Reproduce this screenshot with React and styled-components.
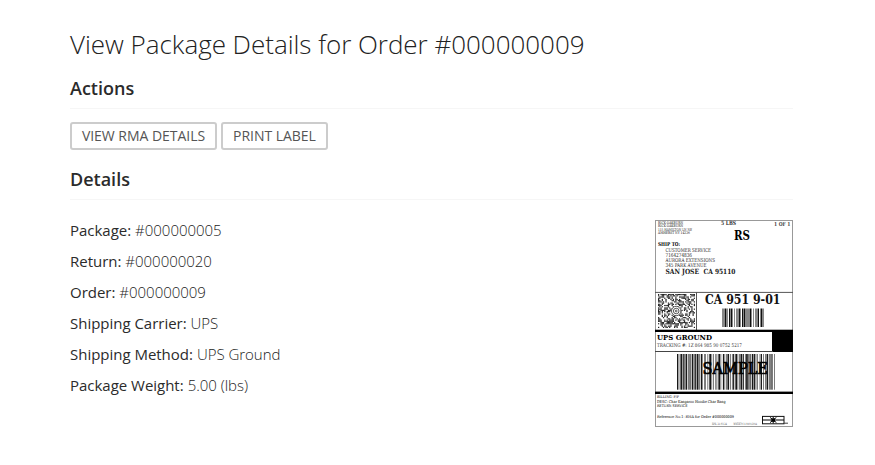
import React from "react";
import styled, { createGlobalStyle } from "styled-components";

const GlobalStyle = createGlobalStyle`
  * { box-sizing: border-box; }
  body {
    margin: 0;
    background: #fff;
    color: #2b2b2b;
    font-family: "Open Sans", sans-serif;
  }
`;

const Page = styled.main`
  width: 793px;
  height: 465px;
  padding: 26px 0 0 70px;
`;

const Title = styled.h1`
  margin: 0;
  color: #222;
  font-size: 26px;
  font-weight: 300;
  line-height: 36px;
  letter-spacing: -0.025px;
  white-space: nowrap;
`;

const SectionTitle = styled.h2`
  height: 32px;
  margin: ${(p) => p.$top}px 0 0;
  border-bottom: 1px solid #f6f6f6;
  font-size: 18px;
  font-weight: 600;
  line-height: 22px;
`;

const Actions = styled.div`
  display: flex;
  gap: 4px;
  margin-top: 13px;
`;

const Button = styled.button`
  width: ${(p) => p.$width}px;
  height: 28px;
  padding: 0;
  border: 2px solid #ccc;
  border-radius: 3px;
  background: #fff;
  color: #555;
  font: 400 14px/24px "Open Sans", sans-serif;
  letter-spacing: -0.03px;
  white-space: nowrap;
`;

const Details = styled.div`
  display: flex;
  justify-content: space-between;
  margin-top: 20px;
`;

const FieldList = styled.dl`
  margin: -5px 0 0;
`;

const Field = styled.div`
  display: flex;
  gap: 4px;
  height: 31px;
  font-size: 15px;
  line-height: 31px;
  letter-spacing: -0.02px;
`;

const Name = styled.dt`
  font-weight: 400;
`;

const Value = styled.dd`
  margin: 0;
  color: #1c1c1c;
  font-weight: 300;
`;

const LabelImage = styled.svg`
  display: block;
  width: 138px;
  height: 207px;
  font-family: "DejaVu Serif", serif;
`;

const fields = [
  ["Package:", "#000000005"],
  ["Return:", "#000000020"],
  ["Order:", "#000000009"],
  ["Shipping Carrier:", "UPS"],
  ["Shipping Method:", "UPS Ground"],
  ["Package Weight:", "5.00 (lbs)"],
];

// [text, x, baseline, width, font size, weight, colour]
const labelTexts = [
  ["RICK OAKBURN", 3, 3.6, 25, 3.7, 400, "#111"],
  ["RICK OAKBURN", 3, 7.1, 25, 3.7, 400, "#111"],
  ["115 HAMILTON LN NE", 3, 10.6, 34, 3.7, 400, "#222"],
  ["AMHERST NY 14226", 3, 14.1, 32, 3.7, 400, "#111"],
  ["5 LBS", 66, 5.2, 15, 5.8, 700, "#333"],
  ["1 OF 1", 119, 6, 16.5, 5.3, 700, "#444"],
  ["RS", 79, 19.6, 16, 12.5, 700, "#000"],
  ["SHIP TO:", 3, 26.4, 22, 5.3, 700, "#000"],
  ["CUSTOMER SERVICE", 10.5, 31.5, 45.5, 5.3, 400, "#222"],
  ["7164274836", 10.5, 36.7, 26.5, 5.3, 400, "#222"],
  ["AURORA EXTENSIONS", 10.5, 41.9, 49.5, 5.3, 400, "#222"],
  ["345 PARK AVENUE", 10.5, 47, 41, 5.3, 400, "#222"],
  ["SAN JOSE", 10.5, 54, 33.5, 7.1, 700, "#222"],
  ["CA 95110", 48.5, 54, 32, 7.1, 700, "#222"],
  ["CA 951 9-01", 50, 84, 75.5, 12.4, 700, "#111"],
  ["UPS GROUND", 2, 120, 55, 8, 700, "#000"],
  ["TRACKING #: 1Z 864 985 90 0752 5217", 2, 127.2, 85, 5.2, 400, "#333"],
  ["BILLING: P/P", 2, 178.3, 22, 3.9, 400, "#000"],
  ["DESC: Char Kangaroo Hoodie Char Bang", 2, 182.8, 68.5, 4, 400, "#000"],
  ["RETURN SERVICE", 2, 187, 30.5, 3.9, 400, "#000"],
  ["Reference No.1: RMA for Order #000000009", 2, 198.3, 77, 3.9, 400, "#000"],
  ["XOL 21.03.24", 57, 204.5, 15, 3, 400, "#444"],
  ["WNTIE70 31.0A 01/2014", 78.5, 204.5, 23.5, 3, 400, "#444"],
];

// Alternating bar and gap widths.
const shortCode = "211131132131121311123112312111222121131212113211212";
const longCode = "211231211132112231112131123311131231121311123113211211321211223112113122113111223121121311221311321121131";

function Bars({ code, x, y, width, height }) {
  const widths = [...code].map(Number);
  const unit = width / widths.reduce((a, b) => a + b, 0);
  let at = x;
  return widths.map((n, i) => {
    const left = at;
    at += n * unit;
    return i % 2 ? null : <rect key={i} x={left} y={y} width={n * unit} height={height} />;
  });
}

const COLS = 30;
const ROWS = 28;
const cells = [];
let seed = 49;
for (let r = 0; r < ROWS; r++) {
  for (let c = 0; c < COLS; c++) {
    seed = (seed * 1664525 + 1013904223) >>> 0;
    if (seed / 4294967296 < 0.52) cells.push([c, r]);
  }
}

function ShippingLabel() {
  return (
    <LabelImage viewBox="0 0 138 207" role="img" aria-label="UPS shipping label">
      <rect x="0.5" y="0.5" width="137" height="206" fill="#fff" stroke="#999" />
      <path d="M0 72.4H138M41.5 72V110" stroke="#555" fill="none" />
      {cells.map(([c, r]) => (
        <rect key={`${c}-${r}`} x={3 + (c * 37) / COLS} y={74 + (r * 34) / ROWS} width="1.24" height="1.22" fill="#222" />
      ))}
      <circle cx="21.2" cy="91" r="5" fill="#fff" />
      <g fill="none" stroke="#444" strokeWidth="0.9">
        <circle cx="21.2" cy="91" r="4.7" />
        <circle cx="21.2" cy="91" r="2.8" />
        <circle cx="21.2" cy="91" r="0.9" />
      </g>
      <g fill="#111">
        <Bars code={shortCode} x={67.5} y={88.5} width={41} height={18.5} />
      </g>
      <rect y="109.7" width="138" height="2.3" />
      <rect x="117" y="110" width="21" height="22" />
      <path d="M0 131.5H118" stroke="#444" />
      <g fill="#181818">
        <Bars code={longCode} x={22} y={134} width={98} height={35.7} />
      </g>
      <rect y="171.6" width="138" height="2.4" />
      {labelTexts.map(([text, x, y, width, size, weight, color]) => (
        <text key={`${x}-${y}`} x={x} y={y} fontSize={size} fontWeight={weight} fill={color} textLength={width} lengthAdjust="spacingAndGlyphs">
          {text}
        </text>
      ))}
      <text x="47.5" y="154" fontSize="15.8" stroke="#000" strokeWidth="0.7" textLength="65.5" lengthAdjust="spacingAndGlyphs">SAMPLE</text>
      <rect x="107.5" y="196.4" width="21.5" height="7.4" fill="#fff" stroke="#111" />
      <path d="M108 200H129M118.2 197V203.4M115 197.4L121.4 202.6M121.4 197.4L115 202.6" stroke="#000" strokeWidth="1" />
      <rect x="116.4" y="198.4" width="3.6" height="3.4" />
      <path d="M129 203.2H133" stroke="#444" />
    </LabelImage>
  );
}

export default function App() {
  return (
    <Page>
      <GlobalStyle />
      <Title>View Package Details for Order #000000009</Title>
      <SectionTitle $top={15}>Actions</SectionTitle>
      <Actions>
        <Button $width={147}>VIEW RMA DETAILS</Button>
        <Button $width={107}>PRINT LABEL</Button>
      </Actions>
      <SectionTitle $top={18}>Details</SectionTitle>
      <Details>
        <FieldList>
          {fields.map(([name, value]) => (
            <Field key={name}>
              <Name>{name}</Name>
              <Value>{value}</Value>
            </Field>
          ))}
        </FieldList>
        <ShippingLabel />
      </Details>
    </Page>
  );
}
